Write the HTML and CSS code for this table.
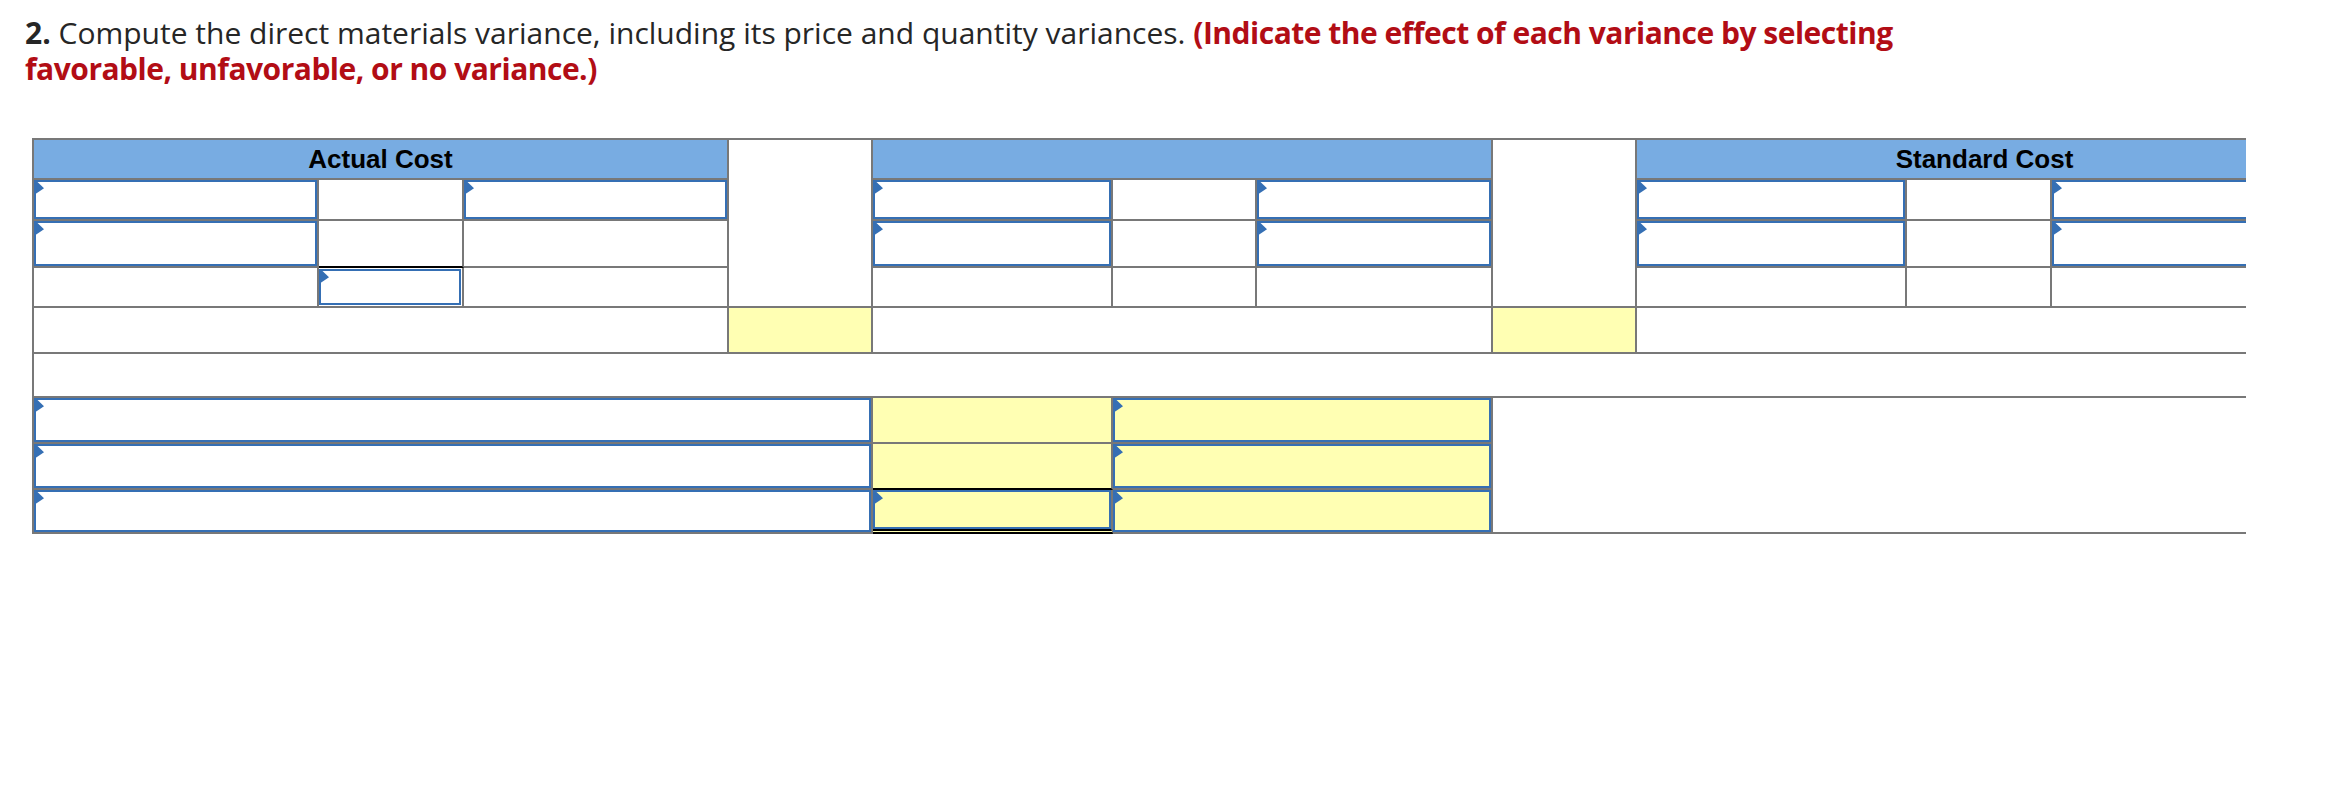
FILE: index.html
```html
<!DOCTYPE html>
<html lang="en">
<head>
<meta charset="utf-8">
<title>Direct materials variance</title>
<link rel="stylesheet" href="styles.css">
</head>
<body>
<div class="page">
  <p class="question"><b class="num">2.</b> Compute the direct materials variance, including its price and quantity variances. <span class="instr">(Indicate the effect of each variance by selecting favorable, unfavorable, or no variance.)</span></p>

  <div class="clip">
    <div class="sheet">
      <!-- header row -->
      <div class="c h s3"><span class="htxt">Actual Cost</span></div>
      <div class="c rs4"></div>
      <div class="c h s3"></div>
      <div class="c rs4"></div>
      <div class="c h s3"><span class="htxt">Standard Cost</span></div>

      <!-- row 1 -->
      <div class="c"><div class="inp arrow"></div></div>
      <div class="c"></div>
      <div class="c"><div class="inp arrow"></div></div>
      <div class="c"><div class="inp arrow"></div></div>
      <div class="c"></div>
      <div class="c"><div class="inp arrow"></div></div>
      <div class="c"><div class="inp arrow"></div></div>
      <div class="c"></div>
      <div class="c"><div class="inp arrow"></div></div>

      <!-- row 2 -->
      <div class="c"><div class="inp arrow"></div></div>
      <div class="c ul"></div>
      <div class="c"></div>
      <div class="c"><div class="inp arrow"></div></div>
      <div class="c"></div>
      <div class="c"><div class="inp arrow"></div></div>
      <div class="c"><div class="inp arrow"></div></div>
      <div class="c"></div>
      <div class="c"><div class="inp arrow"></div></div>

      <!-- row 3 -->
      <div class="c"></div>
      <div class="c"><div class="inp arrow inset"></div></div>
      <div class="c"></div>
      <div class="c"></div>
      <div class="c"></div>
      <div class="c"></div>
      <div class="c"></div>
      <div class="c"></div>
      <div class="c"></div>

      <!-- row 4 -->
      <div class="c s3"></div>
      <div class="c y"></div>
      <div class="c s3"></div>
      <div class="c y"></div>
      <div class="c s3"></div>

      <!-- row 5 -->
      <div class="c s11"></div>

      <!-- row 6 -->
      <div class="c s4"><div class="inp arrow"></div></div>
      <div class="c y"></div>
      <div class="c y s2"><div class="inp arrow"></div></div>
      <div class="c s4 rs3"></div>

      <!-- row 7 -->
      <div class="c s4"><div class="inp arrow"></div></div>
      <div class="c y ul"></div>
      <div class="c y s2"><div class="inp arrow"></div></div>

      <!-- row 8 -->
      <div class="c s4"><div class="inp arrow"></div></div>
      <div class="c y dul"><div class="inp arrow"></div></div>
      <div class="c y s2"><div class="inp arrow"></div></div>
    </div>
  </div>
</div>
</body>
</html>
```
FILE: styles.css
```css
html, body {
  margin: 0;
  padding: 0;
  background: #ffffff;
}

.page {
  padding: 15px 0 0 0;
}

.question {
  margin: 0 0 0 25px;
  width: 1960px;
  font-family: "Open Sans", "Lato", sans-serif;
  font-size: 30px;
  line-height: 36px;
  color: #262626;
}

.num {
  font-weight: 700;
  color: #262626;
}

.instr {
  font-weight: 700;
  letter-spacing: -0.5px;
  color: #b20d15;
}

.clip {
  margin: 51px 0 0 32px;
  width: 2214px;
  overflow: hidden;
}

.sheet {
  display: grid;
  width: 2302px;
  box-sizing: border-box;
  grid-template-columns: 285px 145px 265px 144px 240px 144px 236px 144px 270px 145px 282px;
  grid-template-rows: 40px 41px 47px 40px 46px 44px 46px 46px 44px;
  border-top: 2px solid #787878;
  border-left: 2px solid #787878;
}

.c {
  display: flex;
  box-sizing: border-box;
  background: #ffffff;
  border-right: 2px solid #787878;
  border-bottom: 2px solid #787878;
  min-width: 0;
}

.h {
  background: #78ace2;
  justify-content: center;
  align-items: center;
}

.htxt {
  font-family: "Liberation Sans", Arial, sans-serif;
  font-weight: 700;
  font-size: 26px;
  line-height: 1;
  color: #000000;
}

.y {
  background: #ffffb3;
}

.s2 { grid-column: span 2; }
.s3 { grid-column: span 3; }
.s4 { grid-column: span 4; }
.s11 { grid-column: span 11; }
.rs3 { grid-row: span 3; }
.rs4 { grid-row: span 4; }

.ul {
  border-bottom-color: #000000;
}

.dul {
  border-bottom: 5px double #000000;
}

.inp {
  flex: 1;
  position: relative;
  box-sizing: border-box;
  border: 2px solid #356fb4;
}

.inp.inset {
  margin: 1px 1px 1px 0;
}

.inp.arrow::before {
  content: "";
  position: absolute;
  left: -2px;
  top: 0;
  width: 10px;
  height: 13px;
  background: #356fb4;
  clip-path: polygon(0 0, 35% 0, 100% 48%, 0 100%);
}
```
